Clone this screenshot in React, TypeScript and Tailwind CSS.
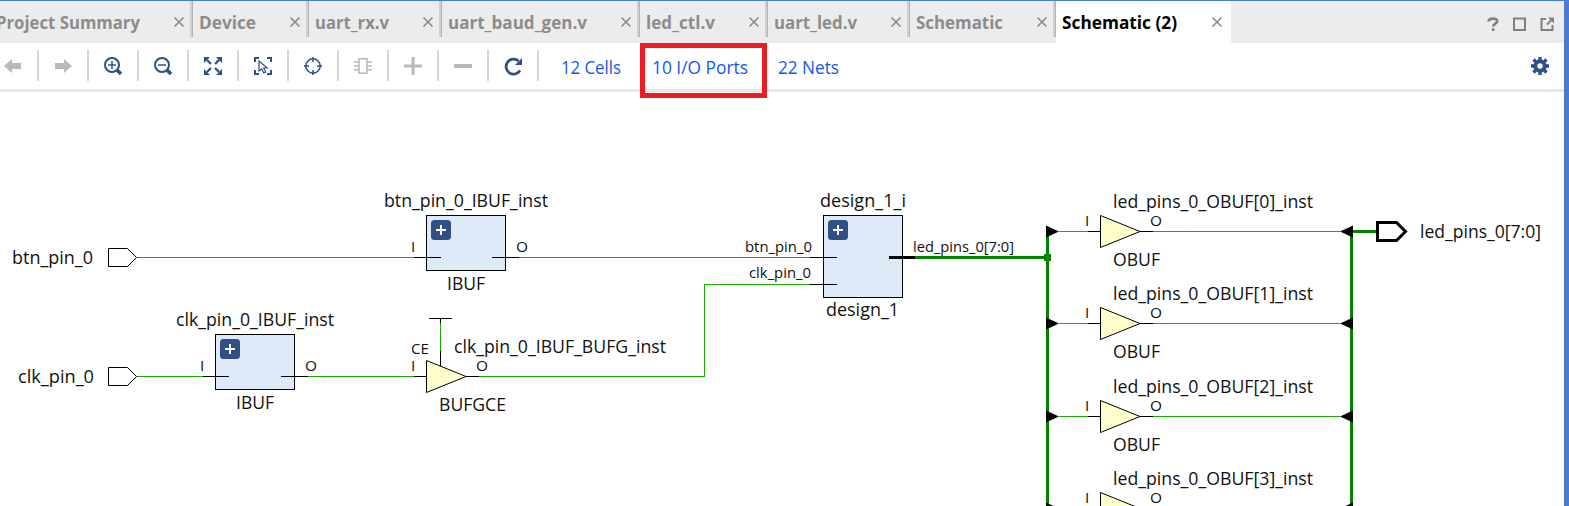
import React from "react";

type Tab = { label: string; w: string; offset: string; text: number; active?: boolean };

const tabs: Tab[] = [
  { label: "Project Summary", w: "w-[193px]", offset: "-ml-[4px]", text: 144 },
  { label: "Device", w: "w-[116px]", offset: "ml-[6px]", text: 57 },
  { label: "uart_rx.v", w: "w-[133px]", offset: "ml-[6px]", text: 74 },
  { label: "uart_baud_gen.v", w: "w-[198px]", offset: "ml-[6px]", text: 139 },
  { label: "led_ctl.v", w: "w-[128px]", offset: "ml-[6px]", text: 69 },
  { label: "uart_led.v", w: "w-[142px]", offset: "ml-[6px]", text: 83 },
  { label: "Schematic", w: "w-[146px]", offset: "ml-[6px]", text: 87 },
  { label: "Schematic (2)", w: "w-[175px]", offset: "ml-[6px]", text: 115, active: true },
];

function Close() {
  return (
    <svg width="12" height="12" viewBox="0 0 12 12" className="mt-[15px] shrink-0 stroke-[#8a8a8a]" fill="none" strokeWidth="1.6">
      <path d="M1.5 1.5 10.5 10.5M10.5 1.5 1.5 10.5" />
    </svg>
  );
}

function Label({ text, width, size, bold, className }: { text: string; width: number; size: number; bold?: boolean; className: string }) {
  return (
    <svg width={width} height="30" className={"shrink-0 overflow-visible " + className}>
      <text x="0" y="21" fontSize={size} fontWeight={bold ? 700 : 400} textLength={width} lengthAdjust="spacingAndGlyphs" fill="currentColor">
        {text}
      </text>
    </svg>
  );
}

function TabBar() {
  return (
    <div className="flex h-[42px] shrink-0 bg-[#ececec]">
      {tabs.map((t) => (
        <div key={t.label} className={`flex shrink-0 ${t.w} ${t.active ? "bg-white pr-[3px] text-black" : "text-[#8c8c8c]"}`}>
          <div className="flex min-w-0 flex-1 items-start justify-between pr-[5px]">
            <Label text={t.label} width={t.text} size={17.6} bold className={t.offset + " mt-[7px]"} />
            <Close />
          </div>
          {!t.active && <div className="h-9 w-[3px] border-r border-[#b4b4b4] bg-[#d0d0d0]" />}
        </div>
      ))}
      <div className="flex flex-1 items-center justify-end gap-[14px] pt-[4px] pr-[10px]">
        <svg width="12" height="14" viewBox="0 0 12 14" fill="none" stroke="#808080" strokeWidth="2.7">
          <path d="M1.6 4.6C1.6.6 10.2.6 10.2 4.200C10.200 6.800 6.200 6.400 6.200 9.600M6.200 11.300v2.700" />
        </svg>
        <svg width="13" height="14" viewBox="0 0 13 14" fill="none" stroke="#808080" strokeWidth="2">
          <path d="M1 1.500h11v11.500h-11z" />
        </svg>
        <svg width="14" height="14" viewBox="0 0 14 14" fill="none" stroke="#808080" strokeWidth="2">
          <path d="M6 2H1.500v11h11V8M7 7.500 11.500 3" />
          <path d="M8 .5h6v6z" fill="#808080" stroke="none" />
        </svg>
      </div>
    </div>
  );
}

const icons: React.ReactNode[] = [
  <path key="l" d="M0 9 8 2v4h9v6H8v4z" fill="#b9b9b9" />,
  <path key="r" d="M18 9 10 2v4H1v6h9v4z" fill="#b9b9b9" />,
  <g key="zi" fill="none" stroke="#2f4f87">
    <circle cx="8" cy="8" r="7" strokeWidth="2" />
    <path d="M4 8h8M8 4v8" strokeWidth="1.5" />
    <path d="m13 13 4 4" strokeWidth="3.6" />
  </g>,
  <g key="zo" fill="none" stroke="#2f4f87">
    <circle cx="8" cy="8" r="7" strokeWidth="2" />
    <path d="M4 8h8" strokeWidth="1.5" />
    <path d="m13 13 4 4" strokeWidth="3.6" />
  </g>,
  <g key="fit" fill="#2f4f87" stroke="#2f4f87" strokeWidth="2.2">
    <path d="m3 3 4 4M15 3l-4 4M3 15l4-4M15 15l-4-4" />
    <path stroke="none" d="M0 0h6L0 6zM18 0v6l-6-6zM0 18v-6l6 6zM18 18h-6l6-6z" />
  </g>,
  <g key="sel" fill="none" stroke="#2f4f87" strokeWidth="2">
    <path d="M5 1H1v4M13 1h4v4M1 13v4h4M17 13v4h-4" />
    <path strokeWidth="1.2" d="M5 4v10l2.7-2 2 4 2-1-2-4h3.5z" />
  </g>,
  <g key="target" fill="none" stroke="#2f4f87" strokeWidth="1.5">
    <circle cx="9" cy="9" r="7.2" />
    <path d="M9 0v5M9 13v5M0 9h5M13 9h5" />
  </g>,
  <g key="cell" fill="none" stroke="#b9b9b9" strokeWidth="1.5">
    <path d="M5 1.700h8v14.600h-8zM0 5h5M0 8.900h5M0 12.800h5M13 5h5M13 8.900h5M13 12.800h5" />
  </g>,
  <path key="plus" d="M7.5 0h3v7.5H18v3h-7.500V18h-3v-7.500H0v-3h7.500z" fill="#b9b9b9" />,
  <path key="minus" d="M0 7h18v4H0z" fill="#b9b9b9" />,
  <g key="reload">
    <path d="M16 13.500A7.500 7.500 0 1 1 14.500 4" fill="none" stroke="#2f4f87" strokeWidth="2.700" />
    <path d="M18 1v7h-7z" fill="#2f4f87" />
  </g>,
];

function Toolbar() {
  return (
    <div className="flex h-[49px] shrink-0 border-b-[3px] border-[#e8e8e8] bg-white">
      <div className="-ml-[11px] flex pt-[7px]">
        {icons.map((icon, i) => (
          <div key={i} className="flex h-[31px] w-[50px] items-center justify-center border-r-2 border-[#d6d6d6]">
            <svg width="18" height="18" viewBox="0 0 18 18" className="overflow-visible">
              {icon}
            </svg>
          </div>
        ))}
      </div>
      <div className="flex pt-[10px] text-[#1257f5]">
        <Label text="12 Cells" width={60} size={17.6} className="ml-[22px]" />
        <div className="relative ml-[31px]">
          <Label text="10 I/O Ports" width={96} size={17.6} className="" />
          <div className="absolute -top-[10px] -left-[12px] h-[55px] w-[127px] border-[5px] border-[#ed1c24]" />
        </div>
        <Label text="22 Nets" width={61} size={17.6} className="ml-[30px]" />
      </div>
      <div className="flex flex-1 justify-end pt-[14px] pr-[15px]">
        <svg width="18" height="18" viewBox="-9 -9 18 18" fill="none" stroke="#2f4f87">
          <circle r="4.700" strokeWidth="4" />
          <path strokeWidth="3.300" d="M0-6v-3M0 6v3M6 0h3M-6 0h-3M4.500-4.500l2-2M-4.500-4.500l-2-2M4.500 4.500l2 2M-4.500 4.500l-2 2" />
        </svg>
      </div>
    </div>
  );
}

function T({ x, y, w, s = 17.6, children }: { x: number; y: number; w: number; s?: number; children: string }) {
  return (
    <text x={x} y={y} fontSize={s} textLength={w > 0 ? w : undefined} lengthAdjust="spacingAndGlyphs">
      {children}
    </text>
  );
}

function Block({ x, y, w, h }: { x: number; y: number; w: number; h: number }) {
  return (
    <g>
      <rect x={x + 0.5} y={y + 0.5} width={w - 1} height={h - 1} fill="#deeaf8" stroke="#000" />
      <rect x={x + 5} y={y + 5} width="20" height="20" rx="3.5" fill="#324f85" />
      <path d={`M${x + 10} ${y + 15}h10M${x + 15} ${y + 10}v10`} stroke="#fff" strokeWidth="2" />
    </g>
  );
}

function Buffer({ x, y }: { x: number; y: number }) {
  return <path d={`M${x + 0.5} ${y - 16}v32l39.500-16z`} fill="#ffffcc" stroke="#000" />;
}

const rows = [
  { y: 231, type: "OBUF" },
  { y: 323, type: "OBUF" },
  { y: 416, type: "OBUF" },
  { y: 508, type: null },
];

function Schematic() {
  return (
    <svg width="1564" height="414" viewBox="0 92 1564 414" className="block bg-white" fill="#111">
      <g fill="none" stroke="#1aac00" shapeRendering="crispEdges">
        <path d="M136 257.500H414M519 257.500H810M136 376.500H203M308 376.500H414M479 376.500H704.500V284.500H810M440.500 323V351" />
      </g>
      <g fill="none" stroke="#000">
        <path d="M108.500 248.500h19l9 9-9 9h-19zM108.500 367.500h19l9 9-9 9h-19z" />
      </g>
      <Block x={426} y={215} w={80} h={56} />
      <Block x={215} y={334} w={80} h={56} />
      <Block x={823} y={215} w={80} h={83} />
      <Buffer x={426} y={376.5} />
      <g fill="none" stroke="#000" shapeRendering="crispEdges">
        <path d="M414 257.500h27M492 257.500h27M203 376.500h26M281 376.500h27M414 376.500h12M466 376.500h13M429 318.500h23M440.500 318v5M440.500 351v15M810 257.500h27M810 284.500h27" />
        <path d="M889 257.500h26" strokeWidth="3" />
      </g>
      <g fill="none" stroke="#008400" strokeWidth="3" shapeRendering="crispEdges">
        <path d="M915 257.500H1047M1047.500 231V506M1351.500 231V506M1351 231.500H1377" />
      </g>
      <rect x="1044" y="254" width="7" height="7" fill="#008400" />
      <path d="M1377.500 222.500h19l9 9-9 9h-19z" fill="#fff" stroke="#000" strokeWidth="3" />
      {rows.map(({ y, type }, i) => (
        <g key={y}>
          <path d={`M1059 ${y + 0.5}H1088M1153 ${y + 0.5}H1340`} stroke="#1aac00" />
          <path d={`M1088 ${y + 0.5}h12M1140 ${y + 0.5}h13`} stroke="#000" />
          <path d={`M1046 ${y - 5.5}v12l13-6zM1353 ${y - 5.5}v12l-13-6z`} fill="#000" />
          <Buffer x={1100} y={y + 0.5} />
          <T x={1113} y={y - 23} w={200}>{`led_pins_0_OBUF[${i}]_inst`}</T>
          <T x={1085} y={y - 5} w={0} s={15.3}>I</T>
          <T x={1150} y={y - 5} w={12} s={15.3}>O</T>
          {type && <T x={1113} y={y + 35} w={47}>{type}</T>}
        </g>
      ))}
      <T x={12} y={264} w={81}>btn_pin_0</T>
      <T x={18} y={383} w={76}>clk_pin_0</T>
      <T x={384} y={207} w={164}>btn_pin_0_IBUF_inst</T>
      <T x={447} y={290} w={38}>IBUF</T>
      <T x={176} y={326} w={158}>clk_pin_0_IBUF_inst</T>
      <T x={236} y={409} w={38}>IBUF</T>
      <T x={454} y={353} w={212}>clk_pin_0_IBUF_BUFG_inst</T>
      <T x={439} y={411} w={67}>BUFGCE</T>
      <T x={820} y={207} w={86}>design_1_i</T>
      <T x={826} y={316} w={73}>design_1</T>
      <T x={1420} y={238} w={121}>led_pins_0[7:0]</T>
      <T x={745} y={252} w={67} s={15}>btn_pin_0</T>
      <T x={749} y={278} w={62} s={15}>clk_pin_0</T>
      <T x={913} y={252} w={101} s={15}>led_pins_0[7:0]</T>
      <T x={411} y={354} w={18} s={15.3}>CE</T>
      <T x={411} y={252} w={0} s={15.3}>I</T>
      <T x={411} y={371} w={0} s={15.3}>I</T>
      <T x={200} y={371} w={0} s={15.3}>I</T>
      <T x={516} y={252} w={12} s={15.3}>O</T>
      <T x={305} y={371} w={12} s={15.3}>O</T>
      <T x={476} y={371} w={12} s={15.3}>O</T>
    </svg>
  );
}

export default function App() {
  return (
    <div className="flex h-[506px] w-[1569px] flex-col overflow-hidden border-t border-r-[5px] border-[#4a7bcd] bg-white font-['Open_Sans',sans-serif]">
      <TabBar />
      <Toolbar />
      <Schematic />
    </div>
  );
}
